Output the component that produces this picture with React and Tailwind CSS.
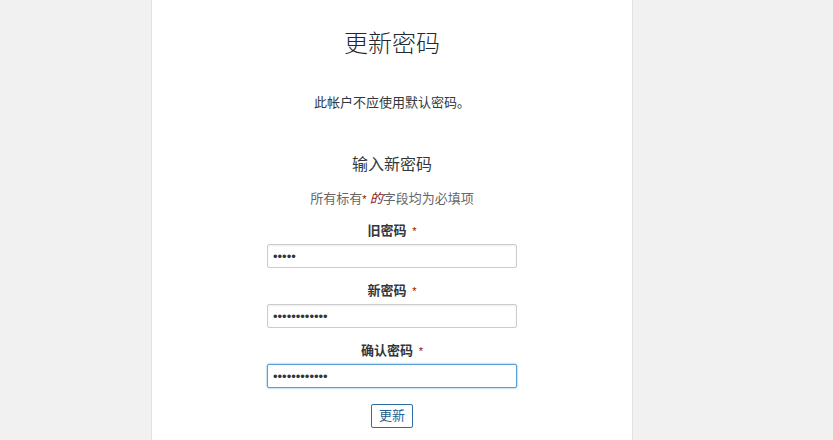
import React from 'react';

const font = { fontFamily: '"Liberation Sans", "Noto Sans CJK SC", sans-serif' };

// Single labelled password field
const Field = ({ label, value, focused = false, first = false }) => (
  <div className={`flex flex-col items-center ${first ? 'mt-[12px]' : 'mt-[13px]'}`}>
    <label className="text-[13px] leading-[20px] font-bold text-[#32373c]">
      {label} <span className="ml-[2px] text-[11px] text-[#a00] font-normal">*</span>
    </label>
    <input
      type="password"
      defaultValue={value}
      autoFocus={focused}
      readOnly={!focused}
      className={`mt-[3px] w-[250px] h-[24px] px-[5px] text-[13px] rounded-[2px] bg-white text-[#32373c] outline-none ${
        focused ? 'border border-[#5b9dd9] shadow-[0_0_2px_rgba(30,140,190,0.8)]' : 'border border-[#ccc] shadow-[inset_0_1px_2px_rgba(0,0,0,0.07)]'
      }`}
    />
  </div>
);

export default function App() {
  return (
    <div className="w-full min-h-[440px] bg-[#f1f1f1]" style={font}>
      <div className="ml-[151px] w-[482px] min-h-[440px] bg-white border-x border-[#e2e2e2] flex flex-col items-center">
        <h1 className="pt-[28px] text-[24px] leading-[32px] font-light text-[#23282d]">更新密码</h1>

        <p className="mt-[33px] text-[13px] leading-[20px] text-[#32373c]">此帐户不应使用默认密码。</p>

        <h2 className="mt-[40px] text-[16px] leading-[24px] font-normal text-[#32373c]">输入新密码</h2>

        <p className="mt-[12px] text-[13px] leading-[20px] text-[#666]">
          所有标有<span className="text-[11px] text-[#a00]">* </span><em className="text-[#8b1a1a]">的</em>字段均为必填项
        </p>

        <form className="flex flex-col items-center" onSubmit={(e) => e.preventDefault()}>
          <Field label="旧密码" value="admin" first />
          <Field label="新密码" value="newpassword1" />
          <Field label="确认密码" value="newpassword1" focused />

          <button
            type="submit"
            className="mt-[16px] h-[24px] px-[7px] text-[13px] leading-[22px] text-[#2a5f8f] bg-white border border-[#2e6da4] rounded-[2px]"
          >
            更新
          </button>
        </form>
      </div>
    </div>
  );
}
